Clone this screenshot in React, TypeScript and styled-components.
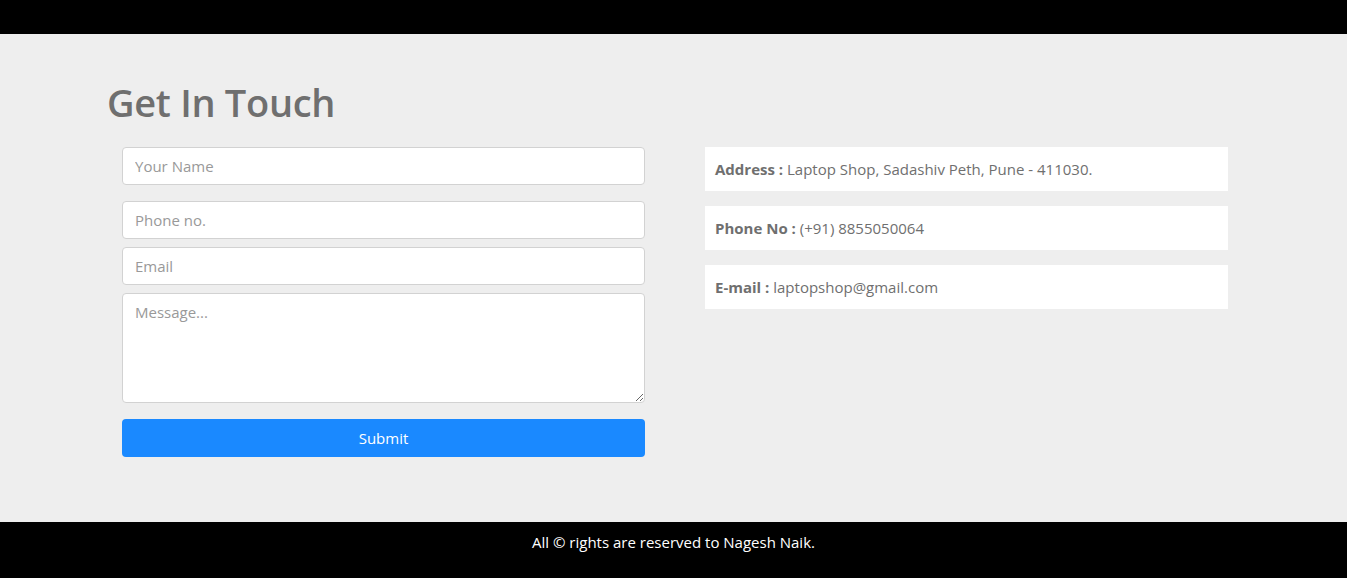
import React from "react";
import styled, { createGlobalStyle } from "styled-components";

const Global = createGlobalStyle`
  * { box-sizing: border-box; }
  html, body { margin: 0; padding: 0; }
  body {
    font-family: "Open Sans", "Noto Sans", "Liberation Sans", sans-serif;
    background: #ffffff;
  }
`;

const Page = styled.div`
  display: flex;
  flex-direction: column;
  min-height: 578px;
`;

const TopBar = styled.header`
  height: 34px;
  background: #000;
`;

const Main = styled.main`
  background: #eeeeee;
  flex: 1;
  padding: 48px 0 0 107px;
  height: 488px;
`;

const Title = styled.h1`
  margin: 0;
  font-size: 38px;
  line-height: 40px;
  font-weight: 600;
  color: #6f6f6f;
  letter-spacing: -0.3px;
`;

const Columns = styled.div`
  display: grid;
  grid-template-columns: 523px 523px;
  column-gap: 60px;
  margin: 25px 0 0 15px;
`;

const Form = styled.form`
  display: flex;
  flex-direction: column;
`;

const Field = styled.input<{ $gap: number }>`
  height: 38px;
  margin-bottom: ${(p) => p.$gap}px;
  padding: 0 12px;
  border: 1px solid #d2d2d2;
  border-radius: 4px;
  background: #fff;
  font-family: inherit;
  font-size: 15px;
  color: #555;
  outline: none;
  &::placeholder { color: #999; }
`;

const Message = styled.textarea`
  height: 110px;
  margin-bottom: 16px;
  padding: 8px 12px;
  border: 1px solid #d2d2d2;
  border-radius: 4px;
  background: #fff;
  font-family: inherit;
  font-size: 15px;
  resize: vertical;
  outline: none;
  &::placeholder { color: #999; }
`;

const Submit = styled.button`
  height: 38px;
  border: none;
  border-radius: 4px;
  background: #1a89ff;
  color: #fff;
  font-family: inherit;
  font-size: 15px;
  cursor: pointer;
`;

const Info = styled.div`
  display: flex;
  flex-direction: column;
  gap: 15px;
`;

const InfoBox = styled.div`
  height: 44px;
  display: flex;
  align-items: center;
  padding: 0 10px;
  background: #fff;
  color: #6f6f6f;
  font-size: 15px;
  white-space: pre;
`;

const Label = styled.b`
  font-weight: 700;
`;

const Footer = styled.footer`
  height: 56px;
  background: #000;
  color: #fff;
  display: flex;
  justify-content: center;
  padding-top: 10px;
  font-size: 15px;
`;

export default function App() {
  return (
    <>
      <Global />
      <Page>
        <TopBar />
        <Main>
          <Title>Get In Touch</Title>
          <Columns>
            <Form onSubmit={(e) => e.preventDefault()}>
              <Field $gap={16} placeholder="Your Name" />
              <Field $gap={8} placeholder="Phone no." />
              <Field $gap={8} placeholder="Email" />
              <Message placeholder="Message..." />
              <Submit type="submit">Submit</Submit>
            </Form>
            <Info>
              <InfoBox>
                <Label>Address : </Label>Laptop Shop, Sadashiv Peth, Pune - 411030.
              </InfoBox>
              <InfoBox>
                <Label>Phone No : </Label>(+91) 8855050064
              </InfoBox>
              <InfoBox>
                <Label>E-mail : </Label>laptopshop@gmail.com
              </InfoBox>
            </Info>
          </Columns>
        </Main>
        <Footer>All © rights are reserved to Nagesh Naik.</Footer>
      </Page>
    </>
  );
}
